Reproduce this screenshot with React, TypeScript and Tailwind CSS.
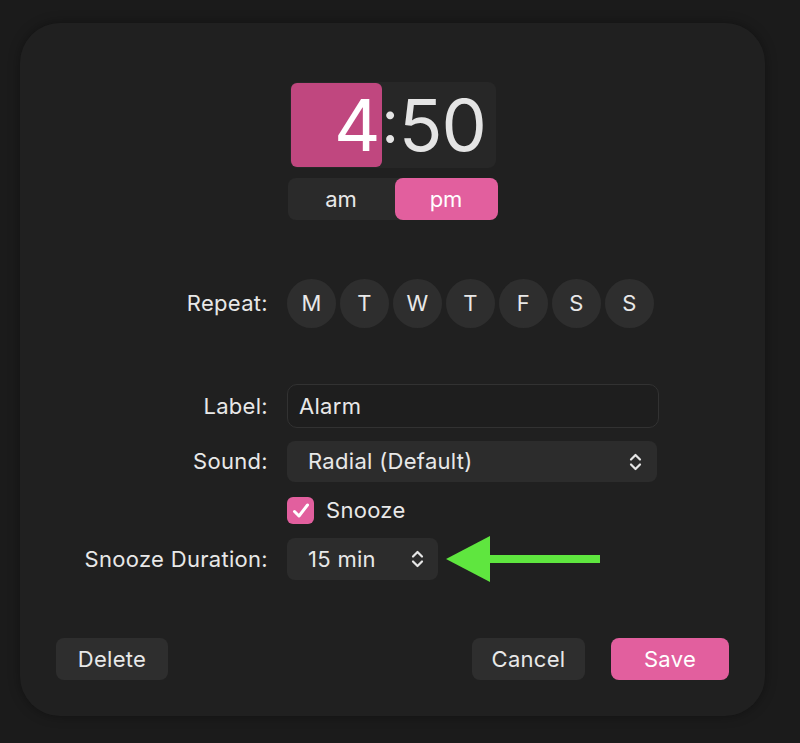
import React from "react";

const Chev = () => (
  <svg width="13" height="20" viewBox="0 0 13 20" fill="none" stroke="#e6e6e6" strokeWidth="2.2" strokeLinecap="round" strokeLinejoin="round">
    <path d="M2 7.5 L6.5 3 L11 7.5" />
    <path d="M2 12.5 L6.5 17 L11 12.5" />
  </svg>
);

export default function App() {
  const days = ["M", "T", "W", "T", "F", "S", "S"];
  return (
    <div className="w-[800px] h-[743px] bg-[#1b1b1b] pt-[23px] pl-[20px] text-[#e8e8e8]" style={{ fontFamily: "Inter, 'Noto Sans', sans-serif" }}>
      <div className="w-[745px] h-[693px] rounded-[40px] bg-[#202020] shadow-[0_0_12px_rgba(0,0,0,0.35)] flex flex-col">
        {/* time */}
        <div className="flex flex-col items-center pt-[59px]">
          <div className="w-[206px] h-[86px] rounded-[8px] bg-[#272727] flex items-center p-[1px]">
            <div className="w-[91px] h-[84px] rounded-[6px] bg-[#c0477f] flex items-center justify-end pr-[3px]">
              <span className="text-[72px] leading-none text-white tracking-[-2px]">4</span>
            </div>
            <span className="text-[60px] leading-none text-[#e4e4e4] -mt-[8px]">:</span>
            <span className="text-[72px] leading-none text-[#e4e4e4] tracking-[-1px]">50</span>
          </div>
          <div className="mt-[10px] w-[210px] h-[42px] rounded-[8px] bg-[#2a2a2a] flex text-[22px]">
            <div className="w-[107px] flex items-center justify-center">am</div>
            <div className="w-[103px] rounded-[8px] bg-[#e25f9e] flex items-center justify-center text-white">pm</div>
          </div>
        </div>

        {/* form */}
        <div className="grid grid-cols-[248px_auto] gap-x-[19px] mt-[59px] text-[22px] tracking-[0.3px]">
          <div className="flex items-center justify-end h-[49px]">Repeat:</div>
          <div className="flex gap-[4px] h-[49px]">
            {days.map((d, i) => (
              <div key={i} className="w-[49px] h-[49px] rounded-full bg-[#2e2e2e] flex items-center justify-center">{d}</div>
            ))}
          </div>

          <div className="flex items-center justify-end h-[44px] mt-[56px]">Label:</div>
          <div className="mt-[56px] w-[372px] h-[44px] rounded-[10px] border border-[#323232] bg-[#1e1e1e] flex items-center pl-[11px]">Alarm</div>

          <div className="flex items-center justify-end h-[41px] mt-[13px]">Sound:</div>
          <div className="mt-[13px] w-[370px] h-[41px] rounded-[8px] bg-[#2c2c2c] flex items-center justify-between pl-[21px] pr-[15px]">
            <span>Radial (Default)</span>
            <Chev />
          </div>

          <div className="h-[27px] mt-[15px]"></div>
          <div className="mt-[15px] h-[27px] flex items-center">
            <div className="w-[27px] h-[27px] rounded-[6px] bg-[#e25f9e] flex items-center justify-center">
              <svg width="22" height="22" viewBox="0 0 22 22" fill="none" stroke="white" strokeWidth="3" strokeLinecap="round" strokeLinejoin="round">
                <path d="M4.5 11.5 L9 16 L17.5 5" />
              </svg>
            </div>
            <span className="ml-[12px]">Snooze</span>
          </div>

          <div className="flex items-center justify-end h-[42px] mt-[14px]">Snooze Duration:</div>
          <div className="mt-[14px] h-[42px] flex items-center">
            <div className="w-[151px] h-[42px] rounded-[8px] bg-[#2c2c2c] flex items-center justify-between pl-[21px] pr-[14px]">
              <span>15 min</span>
              <Chev />
            </div>
            <svg className="ml-[8px]" width="156" height="46" viewBox="0 0 156 46">
              <polygon points="0,23 44,0 44,46" fill="#5fe63f" />
              <rect x="42" y="19" width="112" height="8" fill="#5fe63f" />
            </svg>
          </div>
        </div>

        {/* buttons */}
        <div className="flex items-center mt-[58px] px-[36px] text-[22px] tracking-[0.3px]">
          <div className="w-[112px] h-[42px] rounded-[8px] bg-[#2e2e2e] flex items-center justify-center">Delete</div>
          <div className="flex-1" />
          <div className="w-[113px] h-[42px] rounded-[8px] bg-[#2e2e2e] flex items-center justify-center">Cancel</div>
          <div className="ml-[26px] w-[118px] h-[42px] rounded-[8px] bg-[#e25f9e] flex items-center justify-center text-white">Save</div>
        </div>
      </div>
    </div>
  );
}
